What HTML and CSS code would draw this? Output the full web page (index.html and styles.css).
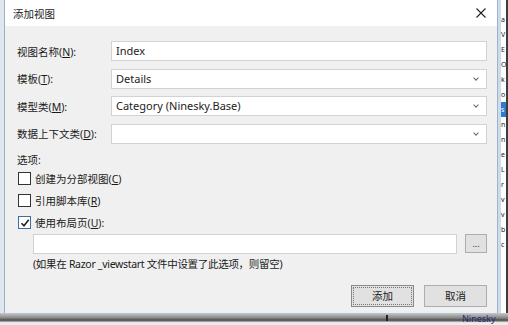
FILE: index.html
```html
<!DOCTYPE html>
<html lang="zh-CN">
  <head>
    <meta charset="UTF-8" />
    <title>添加视图</title>
    <link rel="stylesheet" href="styles.css">
  </head>
  <body>
    <div class="screen">
      <div class="edge-left"></div>
      <div class="dialog">
        <div class="titlebar">
          <span class="title">添加视图</span>
          <svg class="close" width="10" height="10" viewBox="0 0 10 10">
            <path d="M0.5 0.5 L9.5 9.5 M9.5 0.5 L0.5 9.5" stroke="#222" stroke-width="1.1" fill="none" />
          </svg>
        </div>
        <div class="body">
          <div class="form">
            <label>视图名称(<u>N</u>):</label>
            <div class="field">Index</div>
            <label>模板(<u>T</u>):</label>
            <div class="field select">Details<span class="chev"></span></div>
            <label>模型类(<u>M</u>):</label>
            <div class="field select">Category (Ninesky.Base)<span class="chev"></span></div>
            <label>数据上下文类(<u>D</u>):</label>
            <div class="field select"><span class="chev"></span></div>
          </div>

          <div class="section">选项:</div>
          <div class="check"><span class="box"></span>创建为分部视图(<u>C</u>)</div>
          <div class="check"><span class="box"></span>引用脚本库(<u>R</u>)</div>
          <div class="check"><span class="box checked">
            <svg width="10" height="10" viewBox="0 0 10 10"><path d="M1.5 5.2 L4 7.8 L8.7 1.8" stroke="#222" stroke-width="1.6" fill="none" /></svg>
          </span>使用布局页(<u>U</u>):</div>

          <div class="layout-row">
            <div class="field wide"></div>
            <button class="browse">...</button>
          </div>
          <div class="hint">(如果在 Razor _viewstart 文件中设置了此选项，则留空)</div>

          <div class="actions">
            <button class="btn default"><span>添加</span></button>
            <button class="btn">取消</button>
          </div>
        </div>
      </div>
      <div class="edge-right">
        <span>a</span><span>V</span><span>E</span><span>O</span><span>k</span><span>o</span>
        <span class="sel">s</span><span>n</span><span>n</span><span>e</span><span>L</span>
        <span>r</span><span>v</span><span>v</span><span>b</span><span>c</span>
      </div>
    </div>
    <div class="bottom"><span class="tick"></span><span class="ninesky">Ninesky</span></div>
  </body>
</html>
```

FILE: styles.css
```css
body {
  margin: 0;
  width: 508px;
  height: 325px;
  overflow: hidden;
  background: #e9edf2;
  font-family: "Noto Sans", "Noto Sans CJK SC", sans-serif;
  font-size: 10.5px;
  color: #1a1a1a;
}
u {
  text-decoration: underline;
  text-underline-offset: 1px;
}
.screen {
  display: flex;
  height: 313px;
}
.edge-left {
  width: 4px;
  flex-shrink: 0;
  background: #dfe6ee;
  border-right: 1px solid #9fb0c4;
}
.dialog {
  width: 492px;
  flex-shrink: 0;
  display: flex;
  flex-direction: column;
  background: #f0f0f0;
  border-bottom: 2px solid #e8f0f8;
}
.titlebar {
  height: 26px;
  background: #fff;
  display: flex;
  align-items: center;
  justify-content: space-between;
  padding: 0 10px 0 8px;
}
.title {
  font-size: 10.5px;
  color: #222;
}
.close {
  margin-right: 1px;
}
.body {
  flex: 1;
  padding: 15px 10px 0 12px;
}
.form {
  display: grid;
  grid-template-columns: 94px 1fr;
  row-gap: 7.5px;
  align-items: center;
}
.field {
  height: 18px;
  background: #fff;
  border: 1px solid #d2d2d2;
  padding: 0 4px;
  line-height: 18px;
  font-size: 11px;
  color: #222;
  position: relative;
}
.select .chev {
  position: absolute;
  right: 8px;
  top: 6px;
  width: 3px;
  height: 3px;
  border-right: 1px solid #666;
  border-bottom: 1px solid #666;
  transform: rotate(45deg);
}
.section {
  margin-top: 8px;
  height: 16px;
  line-height: 16px;
}
.check {
  display: flex;
  align-items: center;
  height: 22px;
}
.check:first-of-type {
  margin-top: 2px;
}
.box {
  width: 11px;
  height: 11px;
  border: 1px solid #333;
  background: #fff;
  margin: 0 4px 0 1px;
  display: flex;
  align-items: center;
  justify-content: center;
}
.box.checked {
  border-color: #3a6ea5;
}
.layout-row {
  display: flex;
  align-items: center;
  padding-left: 16px;
}
.field.wide {
  flex: 1;
  height: 18px;
}
.browse {
  width: 22px;
  height: 19px;
  margin-left: 8px;
  padding: 0;
  background: #e1e1e1;
  border: 1px solid #adadad;
  font-family: inherit;
  font-size: 9px;
  line-height: 12px;
  color: #333;
}
.hint {
  padding-left: 16px;
  margin-top: 2px;
  height: 17px;
  line-height: 17px;
  letter-spacing: -0.3px;
}
.actions {
  display: flex;
  justify-content: flex-end;
  gap: 10px;
  margin-top: 12px;
}
.btn {
  width: 63px;
  height: 22px;
  padding: 0;
  background: #e1e1e1;
  border: 1px solid #adadad;
  font-family: inherit;
  font-size: 10.5px;
  color: #1a1a1a;
}
.btn.default {
  border-color: #8a8a8a;
  outline: 1px dotted #777;
  outline-offset: -3px;
}
.edge-right {
  box-sizing: border-box;
  width: 11px;
  flex-shrink: 0;
  background: #fff;
  border-left: 1px solid #9fb4cc;
  border-right: 2px solid #3d3d3d;
  box-shadow: inset 3px 0 0 #cddcec;
  padding-left: 3px;
  padding-top: 12px;
  display: flex;
  flex-direction: column;
  font-size: 7px;
  line-height: 15px;
  overflow: hidden;
  color: #222;
}
.edge-right span {
  height: 15px;
}
.edge-right .sel {
  background: #2f7ad1;
  color: #fff;
}
.bottom {
  height: 12px;
  background: linear-gradient(#c8c8c8, #8a8a8a 40%, #4b4b4b 60%, #ececec 80%);
  position: relative;
  overflow: hidden;
}
.tick {
  position: absolute;
  left: 386px;
  top: 2px;
  width: 2px;
  height: 6px;
  background: #222;
}
.ninesky {
  position: absolute;
  left: 462px;
  top: 0;
  font-size: 9px;
  line-height: 11px;
  color: #2a2a6a;
}
```
